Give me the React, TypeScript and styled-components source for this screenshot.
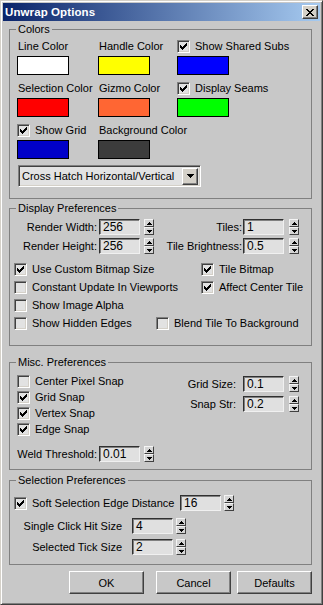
import React from 'react'
import styled, { createGlobalStyle } from 'styled-components'

const GlobalStyle = createGlobalStyle`
  html, body {
    margin: 0;
    padding: 0;
    background: #c8c8c8;
  }
  body {
    font-family: 'Liberation Sans', Arial, sans-serif;
    font-size: 11px;
    color: #000;
  }
`

const Window = styled.div`
  width: 323px;
  height: 605px;
  box-sizing: border-box;
  background: #c8c8c8;
  border-style: solid;
  border-width: 1px;
  border-color: #d4d0c8 #404040 #404040 #d4d0c8;
  box-shadow: inset 1px 1px #fff, inset -1px -1px #808080;
  padding: 2px;
  display: flex;
  flex-direction: column;
`

const TitleBar = styled.div`
  height: 18px;
  display: flex;
  align-items: center;
  justify-content: space-between;
  padding: 0 2px 0 2px;
  background: linear-gradient(to right, #0a246a, #a6caf0);
`

const Title = styled.span`
  color: #fff;
  font-weight: bold;
  font-size: 11.5px;
  letter-spacing: 0.1px;
`

const CloseButton = styled.div`
  width: 16px;
  height: 14px;
  box-sizing: border-box;
  background: #d4d0c8;
  border: 1px solid;
  border-color: #fff #404040 #404040 #fff;
  box-shadow: inset -1px -1px #808080;
  display: flex;
  align-items: center;
  justify-content: center;
`

const Body = styled.div`
  display: flex;
  flex-direction: column;
  padding-left: 6px;
`

const Group = styled.div<{ $top: number; $h: number }>`
  margin-top: ${(p) => p.$top}px;
  height: ${(p) => p.$h}px;
  width: 303px;
  box-sizing: border-box;
  border: 1px solid #808080;
`

const Legend = styled.div`
  width: fit-content;
  height: 13px;
  line-height: 13px;
  margin: -7px 0 0 6px;
  padding: 0 2px;
  background: #c8c8c8;
`

/* colors */
const ColorGrid = styled.div`
  display: grid;
  grid-template-columns: 81px 79px 80px;
  row-gap: 7px;
  padding: 4px 0 0 7px;
`

const ColorCell = styled.div`
  display: flex;
  flex-direction: column;
  gap: 3px;
`

const CellLabel = styled.div`
  height: 13px;
  line-height: 13px;
  white-space: nowrap;
  padding-left: 1px;
`

const Swatch = styled.div<{ $c: string }>`
  width: 52px;
  height: 19px;
  box-sizing: border-box;
  border: 1px solid #000;
  background: ${(p) => p.$c};
`

const Select = styled.div`
  margin: 6px 0 0 8px;
  width: 183px;
  height: 22px;
  box-sizing: border-box;
  border: 1px solid;
  border-color: #808080 #fff #fff #808080;
  box-shadow: inset 1px 1px #404040, inset -1px -1px #d4d0c8;
  background: #e2e2e2;
  display: flex;
  align-items: center;
  justify-content: space-between;
  padding: 0 2px 0 3px;
`

const SelectButton = styled.div`
  width: 16px;
  height: 17px;
  box-sizing: border-box;
  background: #d4d0c8;
  border: 1px solid;
  border-color: #fff #404040 #404040 #fff;
  box-shadow: inset -1px -1px #808080;
  display: flex;
  align-items: center;
  justify-content: center;
`

/* checkbox */
const CheckRow = styled.div`
  display: flex;
  align-items: center;
  gap: 5px;
  height: 13px;
  line-height: 13px;
  white-space: nowrap;
`

const Box = styled.span`
  flex: none;
  width: 13px;
  height: 13px;
  box-sizing: border-box;
  border: 1px solid;
  border-color: #808080 #fff #fff #808080;
  box-shadow: inset 1px 1px #404040, inset -1px -1px #d4d0c8;
  background: #e2e2e2;
  display: flex;
  align-items: center;
  justify-content: center;
`

const Check = ({ label, on }: { label: string; on?: boolean }) => (
  <CheckRow>
    <Box>
      {on && (
        <svg width="7" height="7" viewBox="0 0 7 7">
          <path
            fill="#000"
            d="M6 0h1v1h-1z M5 1h2v1h-2z M0 2h1v1h-1z M4 2h3v1h-3z M0 3h2v1h-2z M3 3h3v1h-3z M0 4h5v1h-5z M1 5h3v1h-3z M2 6h1v1h-1z"
          />
        </svg>
      )}
    </Box>
    <span>{label}</span>
  </CheckRow>
)

/* numeric fields */
const Field = styled.div`
  display: flex;
  align-items: center;
  height: 16px;
`

const FieldLabel = styled.span<{ $w: number; $gap: number }>`
  width: ${(p) => p.$w}px;
  margin-right: ${(p) => p.$gap}px;
  text-align: right;
  white-space: nowrap;
  flex: none;
`

const NumInput = styled.div`
  width: 41px;
  height: 16px;
  box-sizing: border-box;
  border: 1px solid;
  border-color: #303030 #f0f0f0 #f0f0f0 #303030;
  box-shadow: inset 1px 1px #808080;
  background: #e0e0e0;
  padding-left: 3px;
  font-size: 12px;
  line-height: 14px;
  flex: none;
`

const Spinner = styled.div<{ $gap: number }>`
  margin-left: ${(p) => p.$gap}px;
  width: 10px;
  height: 16px;
  display: flex;
  flex-direction: column;
  flex: none;
`

const SpinHalf = styled.div`
  flex: 1;
  box-sizing: border-box;
  border: 1px solid;
  border-color: #f4f4f4 #404040 #404040 #f4f4f4;
  background: #d4d4d4;
  display: flex;
  align-items: center;
  justify-content: center;
`

const Spin = ({ gap }: { gap: number }) => (
  <Spinner $gap={gap}>
    <SpinHalf>
      <svg width="5" height="3" viewBox="0 0 5 3">
        <path d="M2 0h1v1h1v1h1v1h-5v-1h1v-1h1z" fill="#000" />
      </svg>
    </SpinHalf>
    <SpinHalf>
      <svg width="5" height="3" viewBox="0 0 5 3">
        <path d="M0 0h5v1h-1v1h-1v1h-1v-1h-1v-1h-1z" fill="#000" />
      </svg>
    </SpinHalf>
  </Spinner>
)

type NumProps = { label: React.ReactNode; value: string; w: number; gap: number; spinGap?: number }

const NumField = ({ label, value, w, gap, spinGap = 4 }: NumProps) => (
  <Field>
    <FieldLabel $w={w} $gap={gap}>
      {label}
    </FieldLabel>
    <NumInput>{value}</NumInput>
    <Spin gap={spinGap} />
  </Field>
)

/* display prefs */
const FieldRows = styled.div`
  display: flex;
  flex-direction: column;
  gap: 3px;
  padding-top: 4px;
`

const FieldPair = styled.div`
  display: flex;
`

const CheckList = styled.div<{ $top: number; $left: number; $gap: number }>`
  display: flex;
  flex-direction: column;
  gap: ${(p) => p.$gap}px;
  padding: ${(p) => p.$top}px 0 0 ${(p) => p.$left}px;
`

const CheckLine = styled.div<{ $split: number }>`
  display: grid;
  grid-template-columns: ${(p) => p.$split}px auto;
`

/* misc prefs */
const MiscColumns = styled.div`
  display: flex;
  padding-top: 6px;
`

const MiscLeft = styled.div`
  width: 170px;
  padding-left: 7px;
  box-sizing: border-box;
  display: flex;
  flex-direction: column;
  gap: 3px;
`

const MiscRight = styled.div`
  display: flex;
  flex-direction: column;
  gap: 4px;
  padding-top: 1px;
`

const WeldRow = styled.div`
  margin-top: 10px;
`

/* selection prefs */
const SelRows = styled.div`
  display: flex;
  flex-direction: column;
  padding-top: 8px;
`

const SelRow = styled.div<{ $top?: number; $left?: number }>`
  display: flex;
  align-items: center;
  margin-top: ${(p) => p.$top ?? 0}px;
  padding-left: ${(p) => p.$left ?? 0}px;
`

const SelCheck = styled.div`
  width: 166px;
`

/* buttons */
const ButtonRow = styled.div`
  display: flex;
  margin-top: 6px;
  padding-left: 60px;
`

const Button = styled.div<{ $gap?: number }>`
  margin-left: ${(p) => p.$gap ?? 0}px;
  width: 75px;
  height: 23px;
  box-sizing: border-box;
  border: 1px solid;
  border-color: #fff #404040 #404040 #fff;
  box-shadow: inset -1px -1px #808080;
  display: flex;
  align-items: center;
  justify-content: center;
  font-size: 11px;
`

export default function App() {
  return (
    <>
      <GlobalStyle />
      <Window>
        <TitleBar>
          <Title>Unwrap Options</Title>
          <CloseButton>
            <svg width="8" height="7" viewBox="0 0 8 7">
              <path
                fill="#000"
                d="M0 0h2v1h-2z M6 0h2v1h-2z M1 1h2v1h-2z M5 1h2v1h-2z M2 2h4v1h-4z M3 3h2v1h-2z M2 4h4v1h-4z M1 5h2v1h-2z M5 5h2v1h-2z M0 6h2v1h-2z M6 6h2v1h-2z"
              />
            </svg>
          </CloseButton>
        </TitleBar>

        <Body>
          <Group $top={8} $h={170}>
            <Legend>Colors</Legend>
            <ColorGrid>
              <ColorCell>
                <CellLabel>Line Color</CellLabel>
                <Swatch $c="#ffffff" />
              </ColorCell>
              <ColorCell>
                <CellLabel>Handle Color</CellLabel>
                <Swatch $c="#ffff00" />
              </ColorCell>
              <ColorCell>
                <Check label="Show Shared Subs" on />
                <Swatch $c="#0000ff" />
              </ColorCell>
              <ColorCell>
                <CellLabel>Selection Color</CellLabel>
                <Swatch $c="#ff0000" />
              </ColorCell>
              <ColorCell>
                <CellLabel>Gizmo Color</CellLabel>
                <Swatch $c="#ff6633" />
              </ColorCell>
              <ColorCell>
                <Check label="Display Seams" on />
                <Swatch $c="#00ff00" />
              </ColorCell>
              <ColorCell>
                <Check label="Show Grid" on />
                <Swatch $c="#0000c8" />
              </ColorCell>
              <ColorCell>
                <CellLabel>Background Color</CellLabel>
                <Swatch $c="#3c3c3c" />
              </ColorCell>
            </ColorGrid>
            <Select>
              <span>Cross Hatch Horizontal/Vertical</span>
              <SelectButton>
                <svg width="7" height="4" viewBox="0 0 7 4">
                  <path d="M0 0h7v1h-1v1h-1v1h-1v1h-1v-1h-1v-1h-1v-1h-1z" fill="#000" />
                </svg>
              </SelectButton>
            </Select>
          </Group>

          <Group $top={9} $h={138}>
            <Legend>Display Preferences</Legend>
            <FieldRows>
              <FieldPair>
                <NumField label="Render Width:" value="256" w={87} gap={2} />
                <NumField label="Tiles:" value="1" w={88} gap={1} spinGap={5} />
              </FieldPair>
              <FieldPair>
                <NumField label="Render Height:" value="256" w={87} gap={2} />
                <NumField label="Tile Brightness:" value="0.5" w={88} gap={1} spinGap={5} />
              </FieldPair>
            </FieldRows>
            <CheckList $top={9} $left={4} $gap={5}>
              <CheckLine $split={187}>
                <Check label="Use Custom Bitmap Size" on />
                <Check label="Tile Bitmap" on />
              </CheckLine>
              <CheckLine $split={187}>
                <Check label="Constant Update In Viewports" />
                <Check label="Affect Center Tile" on />
              </CheckLine>
              <CheckLine $split={187}>
                <Check label="Show Image Alpha" />
              </CheckLine>
              <CheckLine $split={142}>
                <Check label="Show Hidden Edges" />
                <Check label="Blend Tile To Background" />
              </CheckLine>
            </CheckList>
          </Group>

          <Group $top={16} $h={108}>
            <Legend>Misc. Preferences</Legend>
            <MiscColumns>
              <MiscLeft>
                <Check label="Center Pixel Snap" />
                <Check label="Grid Snap" on />
                <Check label="Vertex Snap" on />
                <Check label="Edge Snap" on />
              </MiscLeft>
              <MiscRight>
                <NumField label="Grid Size:" value="0.1" w={56} gap={7} spinGap={5} />
                <NumField label="Snap Str:" value="0.2" w={56} gap={7} spinGap={5} />
              </MiscRight>
            </MiscColumns>
            <WeldRow>
              <NumField label="Weld Threshold:" value="0.01" w={87} gap={2} />
            </WeldRow>
          </Group>

          <Group $top={10} $h={85}>
            <Legend>Selection Preferences</Legend>
            <SelRows>
              <SelRow $left={4}>
                <SelCheck>
                  <Check label="Soft Selection Edge Distance" on />
                </SelCheck>
                <NumInput>16</NumInput>
                <Spin gap={3} />
              </SelRow>
              <SelRow $top={7}>
                <NumField label="Single Click Hit Size" value="4" w={112} gap={10} spinGap={3} />
              </SelRow>
              <SelRow $top={5}>
                <NumField label="Selected Tick Size" value="2" w={112} gap={10} spinGap={3} />
              </SelRow>
            </SelRows>
          </Group>

          <ButtonRow>
            <Button>OK</Button>
            <Button $gap={12}>Cancel</Button>
            <Button $gap={6}>Defaults</Button>
          </ButtonRow>
        </Body>
      </Window>
    </>
  )
}
